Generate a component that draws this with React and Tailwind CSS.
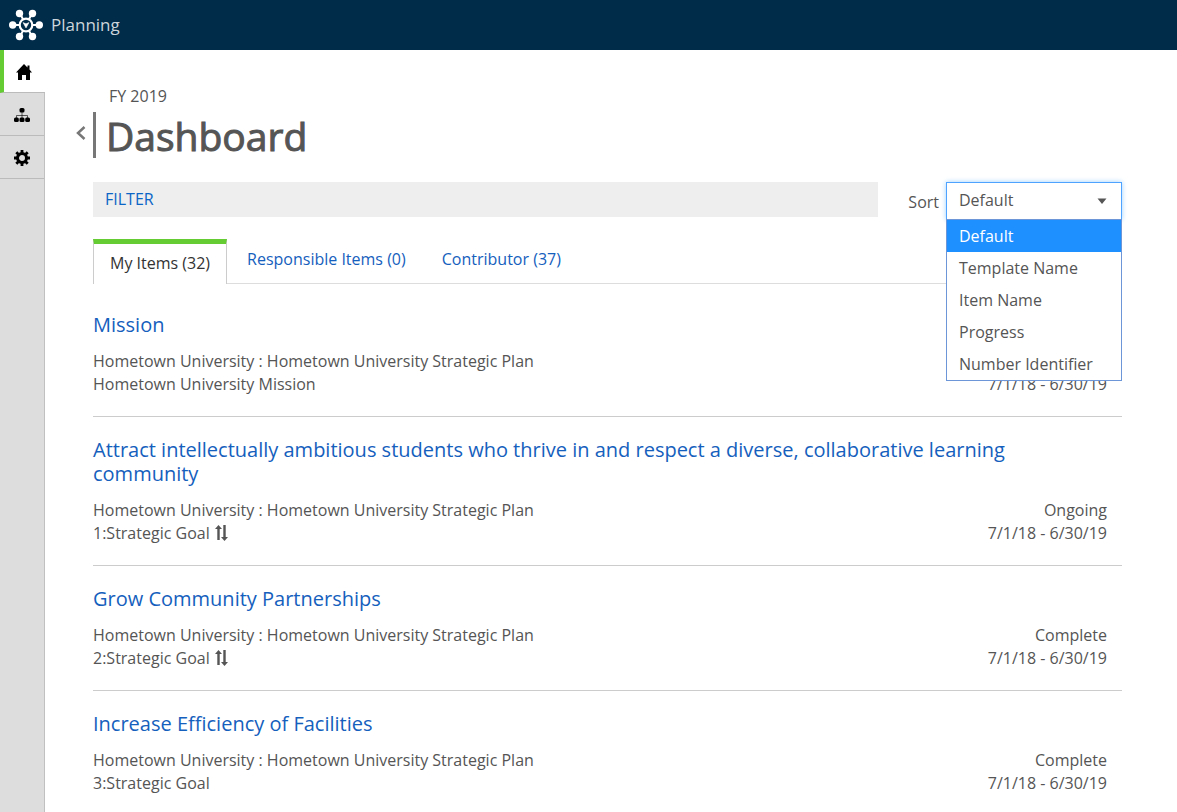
import { useState } from "react";

const sortOptions = ["Default", "Template Name", "Item Name", "Progress", "Number Identifier"];

const tabs = [
  { id: "mine", label: "My Items (32)" },
  { id: "responsible", label: "Responsible Items (0)" },
  { id: "contributor", label: "Contributor (37)" },
];

const plan = "Hometown University : Hometown University Strategic Plan";

const items = [
  { title: "Mission", type: "Hometown University Mission" },
  {
    title:
      "Attract intellectually ambitious students who thrive in and respect a diverse, collaborative learning community",
    type: "1:Strategic Goal",
    status: "Ongoing",
    linked: true,
  },
  { title: "Grow Community Partnerships", type: "2:Strategic Goal", status: "Complete", linked: true },
  { title: "Increase Efficiency of Facilities", type: "3:Strategic Goal", status: "Complete" },
];

function Logo() {
  return (
    <svg width="34" height="32" viewBox="0 0 34 32" fill="white" stroke="white" aria-hidden="true">
      <path d="M11 4.500L23 27.500M23 4.500L11 27.500M4 16H11M23 16H30" strokeWidth="2" />
      <circle cx="17" cy="16" r="6.300" fill="#002b49" strokeWidth="2.200" />
      <path d="M14 13.600l3 1.200 3-1.200-3 5.400z" strokeWidth="0.500" />
      <g stroke="none">
        <circle cx="10.500" cy="4.500" r="3.700" />
        <circle cx="23.500" cy="4.500" r="3.700" />
        <circle cx="3.700" cy="16" r="3.700" />
        <circle cx="30.300" cy="16" r="3.700" />
        <circle cx="10.500" cy="27.500" r="3.700" />
        <circle cx="23.500" cy="27.500" r="3.700" />
      </g>
    </svg>
  );
}

function HomeIcon() {
  return (
    <svg width="16" height="16" viewBox="0 0 16 16" fill="currentColor" aria-hidden="true">
      <path d="M8 0L11.500 3.500V1.500H13.500V5.500L16 8.500H14V16H10V11H6V16H2V8.500H0z" />
    </svg>
  );
}

function HierarchyIcon() {
  return (
    <svg width="16" height="16" viewBox="0 0 16 16" fill="currentColor" aria-hidden="true">
      <path d="M8 5V11M2.500 11V8.500H13.500V11" fill="none" stroke="currentColor" strokeOpacity="0.600" />
      <rect x="5.500" y="1" width="5" height="4.500" rx="1.500" />
      <rect x="0" y="10.500" width="4.800" height="4.500" rx="1.500" />
      <rect x="5.500" y="10.500" width="5" height="4.500" rx="1.500" />
      <rect x="11.200" y="10.500" width="4.800" height="4.500" rx="1.500" />
    </svg>
  );
}

function GearIcon() {
  return (
    <svg width="16" height="16" viewBox="0 0 16 16" fill="none" stroke="currentColor" aria-hidden="true">
      <circle cx="8" cy="8" r="4.500" strokeWidth="3" />
      <path
        d="M8 0V3M8 13V16M0 8H3M13 8H16M2.300 2.300L4.500 4.500M11.500 11.500L13.700 13.700M2.300 13.700L4.500 11.500M11.500 4.500L13.700 2.300"
        strokeWidth="2.800"
      />
    </svg>
  );
}

function UpDownIcon() {
  return (
    <svg className="ml-px inline-block align-[-2px]" width="13" height="16" viewBox="0 0 13 16" fill="currentColor" aria-hidden="true">
      <path d="M3.500 0L7 4H4.700V15H2.300V4H0z" />
      <path d="M9.500 16L6 12H8.300V0H10.700V12H13z" />
    </svg>
  );
}

function SideNav() {
  const link = "flex h-[43px] items-center justify-center border-b border-[#bbb] pt-[2px]";

  return (
    <nav className="w-[45px] shrink-0 border-r border-[#c0c0c0] bg-[#ddd] text-black">
      <a
        href="#home"
        aria-label="Home"
        className="-mr-px flex h-[43px] items-center border-b border-l-4 border-b-[#bbb] border-l-[#6c3] bg-white pt-[2px] pl-3"
      >
        <HomeIcon />
      </a>
      <a href="#plans" aria-label="Plans" className={link}>
        <HierarchyIcon />
      </a>
      <a href="#settings" aria-label="Settings" className={link}>
        <GearIcon />
      </a>
    </nav>
  );
}

function SortMenu() {
  const [sort, setSort] = useState("Default");
  const [open, setOpen] = useState(true);

  return (
    <div className="flex items-center">
      <label htmlFor="sort" className="pt-[2px] pr-[7px]">
        Sort
      </label>
      <div className="relative w-44">
        <select
          id="sort"
          value={sort}
          onChange={(e) => setSort(e.target.value)}
          className="block h-[38px] w-full appearance-none border border-[#4da3ff] bg-white px-3 pb-[2px] shadow-[0_0_5px_#9fd0ff] outline-none"
        >
          {sortOptions.map((o) => (
            <option key={o}>{o}</option>
          ))}
        </select>
        <svg className="pointer-events-none absolute top-4 right-[15px]" width="10" height="6" viewBox="0 0 10 6" fill="#555">
          <path d="M0.500 0.500H9.500L5 6z" />
        </svg>
        {open && (
          <ul role="listbox" aria-label="Sort" className="absolute top-[37px] left-0 z-10 w-full border border-[#6d96d8] bg-white">
            {sortOptions.map((o) => (
              <li
                key={o}
                role="option"
                aria-selected={o === sort}
                onClick={() => {
                  setSort(o);
                  setOpen(false);
                }}
                className={o === sort ? "h-8 bg-[#1e90ff] px-3 leading-8 text-white" : "h-8 px-3 leading-8"}
              >
                {o}
              </li>
            ))}
          </ul>
        )}
      </div>
    </div>
  );
}

function Item({ item }) {
  return (
    <li className="border-b border-[#ccc] pt-[21px] pb-5">
      <h2 className="mb-[13px] pr-20 text-xl leading-6">
        <a href="#item" className="text-[#1560bd]">
          {item.title}
        </a>
      </h2>
      <div className="flex items-end justify-between pr-[15px] leading-[23px]">
        <div>
          <p>{plan}</p>
          <p>
            {item.type} {item.linked && <UpDownIcon />}
          </p>
        </div>
        <div className="text-right">
          {item.status && <p>{item.status}</p>}
          <p>7/1/18 - 6/30/19</p>
        </div>
      </div>
    </li>
  );
}

export default function App() {
  const [tab, setTab] = useState("mine");

  return (
    <div className="flex min-h-screen flex-col bg-white font-['Open_Sans',sans-serif] text-base text-[#555]">
      {/* Top bar */}
      <header className="flex h-[50px] items-center gap-2 bg-[#002b49] px-[9px]">
        <Logo />
        <span className="text-[17px] text-[#ccd5db]">Planning</span>
      </header>

      <div className="flex flex-1">
        <SideNav />

        <main className="min-w-0 flex-1 pt-[34px] pr-[55px] pl-[31px]">
          {/* Page title */}
          <p className="pl-[33px] leading-6">FY 2019</p>
          <div className="mt-1 flex items-center">
            <button type="button" aria-label="Back" className="w-[17px] pb-1">
              <svg width="10" height="14" viewBox="0 0 10 14" fill="none" stroke="#777" strokeWidth="2.500" aria-hidden="true">
                <path d="M8.500 1L2 7L8.500 13" />
              </svg>
            </button>
            <h1 className="h-[46px] border-l-3 border-[#777] pl-[10px] text-[39px] leading-[48px] [-webkit-text-stroke:1px_#555]">
              Dashboard
            </h1>
          </div>

          <div className="pl-[17px]">
            {/* Filter and sort */}
            <div className="mt-6 flex items-start gap-[30px]">
              <button type="button" className="h-[35px] flex-1 bg-[#eee] px-3 pb-[2px] text-left text-[#0b65c6]">
                FILTER
              </button>
              <SortMenu />
            </div>

            {/* Tabs */}
            <div role="tablist" className="mt-[19px] flex h-[45px] border-b border-[#ddd]">
              {tabs.map((t) => (
                <button
                  key={t.id}
                  type="button"
                  role="tab"
                  aria-selected={t.id === tab}
                  onClick={() => setTab(t.id)}
                  className={
                    t.id === tab
                      ? "h-[45px] border-x border-t-5 border-x-[#ccc] border-t-[#6c3] bg-white px-4 pb-[2px] text-[#333]"
                      : "mr-4 h-10 pl-5 text-[#1560bd]"
                  }
                >
                  {t.label}
                </button>
              ))}
            </div>

            <ul className="mt-2">
              {items.map((item) => (
                <Item key={item.title} item={item} />
              ))}
            </ul>
          </div>
        </main>
      </div>
    </div>
  );
}
